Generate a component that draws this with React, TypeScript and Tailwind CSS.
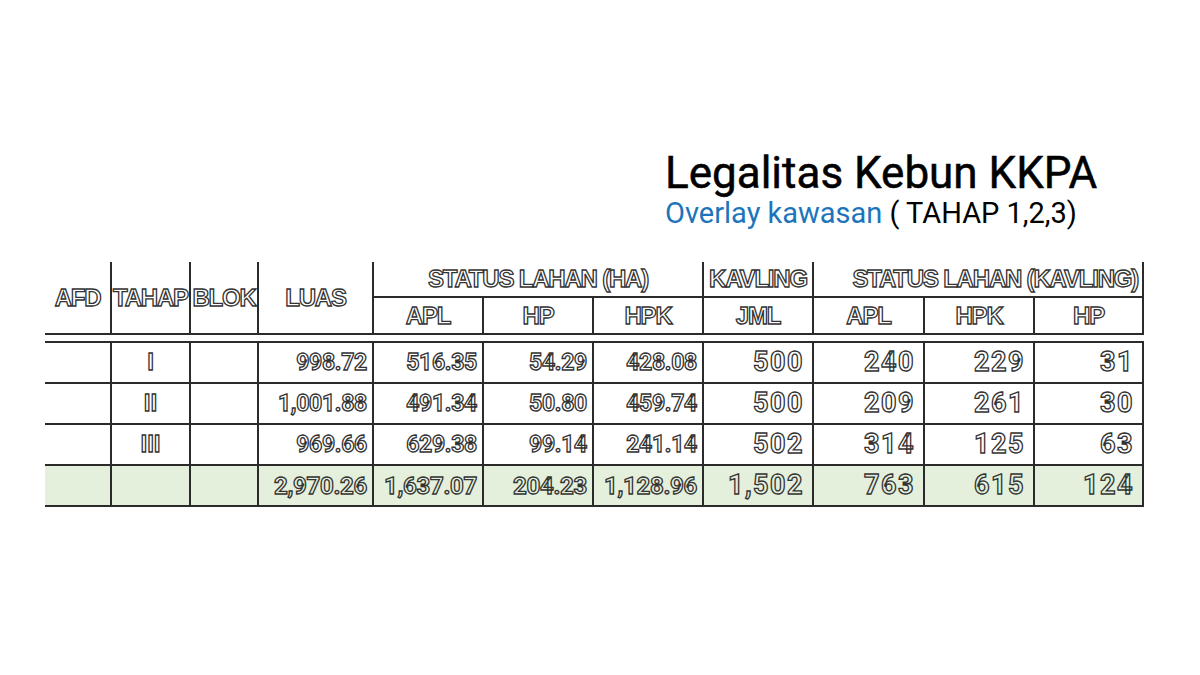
const rows = [
  { tahap: "I", luas: "998.72", apl: "516.35", hp: "54.29", hpk: "428.08", jml: "500", kApl: "240", kHpk: "229", kHp: "31" },
  { tahap: "II", luas: "1,001.88", apl: "491.34", hp: "50.80", hpk: "459.74", jml: "500", kApl: "209", kHpk: "261", kHp: "30" },
  { tahap: "III", luas: "969.66", apl: "629.38", hp: "99.14", hpk: "241.14", jml: "502", kApl: "314", kHpk: "125", kHp: "63" },
];

const total = { luas: "2,970.26", apl: "1,637.07", hp: "204.23", hpk: "1,128.96", jml: "1,502", kApl: "763", kHpk: "615", kHp: "124" };

const widths = [66, 79, 68, 115, 110, 110, 110, 110, 111, 110, 109];

const hd =
  "border-[#2b2b2b] text-[24px] font-bold tracking-[-1.2px] text-transparent [-webkit-text-stroke:1.3px_#333] [font-family:'Liberation_Sans',Arial,sans-serif] text-center leading-none whitespace-nowrap";
const num =
  "font-bold text-transparent [-webkit-text-stroke:1.3px_#333] [font-family:Roboto,'Liberation_Sans',sans-serif] leading-none whitespace-nowrap";

const Cols = () => (
  <colgroup>
    {widths.map((w, i) => (
      <col key={i} style={{ width: w }} />
    ))}
  </colgroup>
);

const BodyRow = ({ r, green }: { r: any; green?: boolean }) => {
  const bg = green ? "bg-[#e4f0dc]" : "";
  const cell = `border-b-2 border-r-2 border-[#2b2b2b] h-[41px] ${bg}`;
  const small = `${cell} ${num} text-right pr-[5px] ${green ? "text-[24px] tracking-[-0.3px]" : "text-[23px] tracking-[-0.3px]"}`;
  const big = `${cell} ${num} text-right pr-[8px] text-[27px] tracking-[1.5px]`;
  return (
    <tr>
      <td className={`border-b-2 border-r-2 border-[#2b2b2b] h-[41px] ${bg}`}></td>
      <td className={`${cell} ${num} text-center text-[23px]`}>{r.tahap}</td>
      <td className={cell}></td>
      <td className={small}>{r.luas}</td>
      <td className={small}>{r.apl}</td>
      <td className={small}>{r.hp}</td>
      <td className={small}>{r.hpk}</td>
      <td className={big}>{r.jml}</td>
      <td className={big}>{r.kApl}</td>
      <td className={big}>{r.kHpk}</td>
      <td className={big}>{r.kHp}</td>
    </tr>
  );
};

const App = () => {
  return (
    <div className="w-[1200px] h-[675px] bg-white overflow-hidden pt-[151px] px-[45px]">
      <div className="ml-[620px] flex flex-col gap-[4px] [font-family:Roboto,'Liberation_Sans',sans-serif]">
        <h1 className="text-[44px] leading-none text-black whitespace-nowrap [-webkit-text-stroke:0.5px_#000]">Legalitas Kebun KKPA</h1>
        <p className="text-[29px] leading-none text-black whitespace-nowrap">
          <span className="text-[#1c75bc]">Overlay kawasan</span> ( TAHAP 1,2,3)
        </p>
      </div>

      <table className="mt-[34px] border-collapse table-fixed w-[1098px]">
        <Cols />
        <thead>
          <tr>
            <th rowSpan={2} className={`${hd} border-b-2 border-r-2`}>AFD</th>
            <th rowSpan={2} className={`${hd} border-b-2 border-r-2`}>TAHAP</th>
            <th rowSpan={2} className={`${hd} border-b-2 border-r-2`}>BLOK</th>
            <th rowSpan={2} className={`${hd} border-b-2 border-r-2`}>LUAS</th>
            <th colSpan={3} className={`${hd} border-b-2 border-r-2 h-[35px]`}>STATUS LAHAN (HA)</th>
            <th className={`${hd} border-b-2 border-r-2`}>KAVLING</th>
            <th colSpan={3} className={`${hd} border-b-2 border-r-2 !text-right pr-[4px]`}>STATUS LAHAN (KAVLING)</th>
          </tr>
          <tr>
            {["APL", "HP", "HPK", "JML", "APL", "HPK", "HP"].map((t, i) => (
              <th key={i} className={`${hd} border-b-2 border-r-2 h-[37px]`}>
                {t}
              </th>
            ))}
          </tr>
        </thead>
      </table>

      <table className="mt-[6px] border-collapse table-fixed w-[1098px] border-t-2 border-[#2b2b2b]">
        <Cols />
        <tbody>
          {rows.map((r, i) => (
            <BodyRow key={i} r={r} />
          ))}
          <BodyRow r={{ ...total, tahap: "" }} green />
        </tbody>
      </table>
    </div>
  );
};

export default App;
